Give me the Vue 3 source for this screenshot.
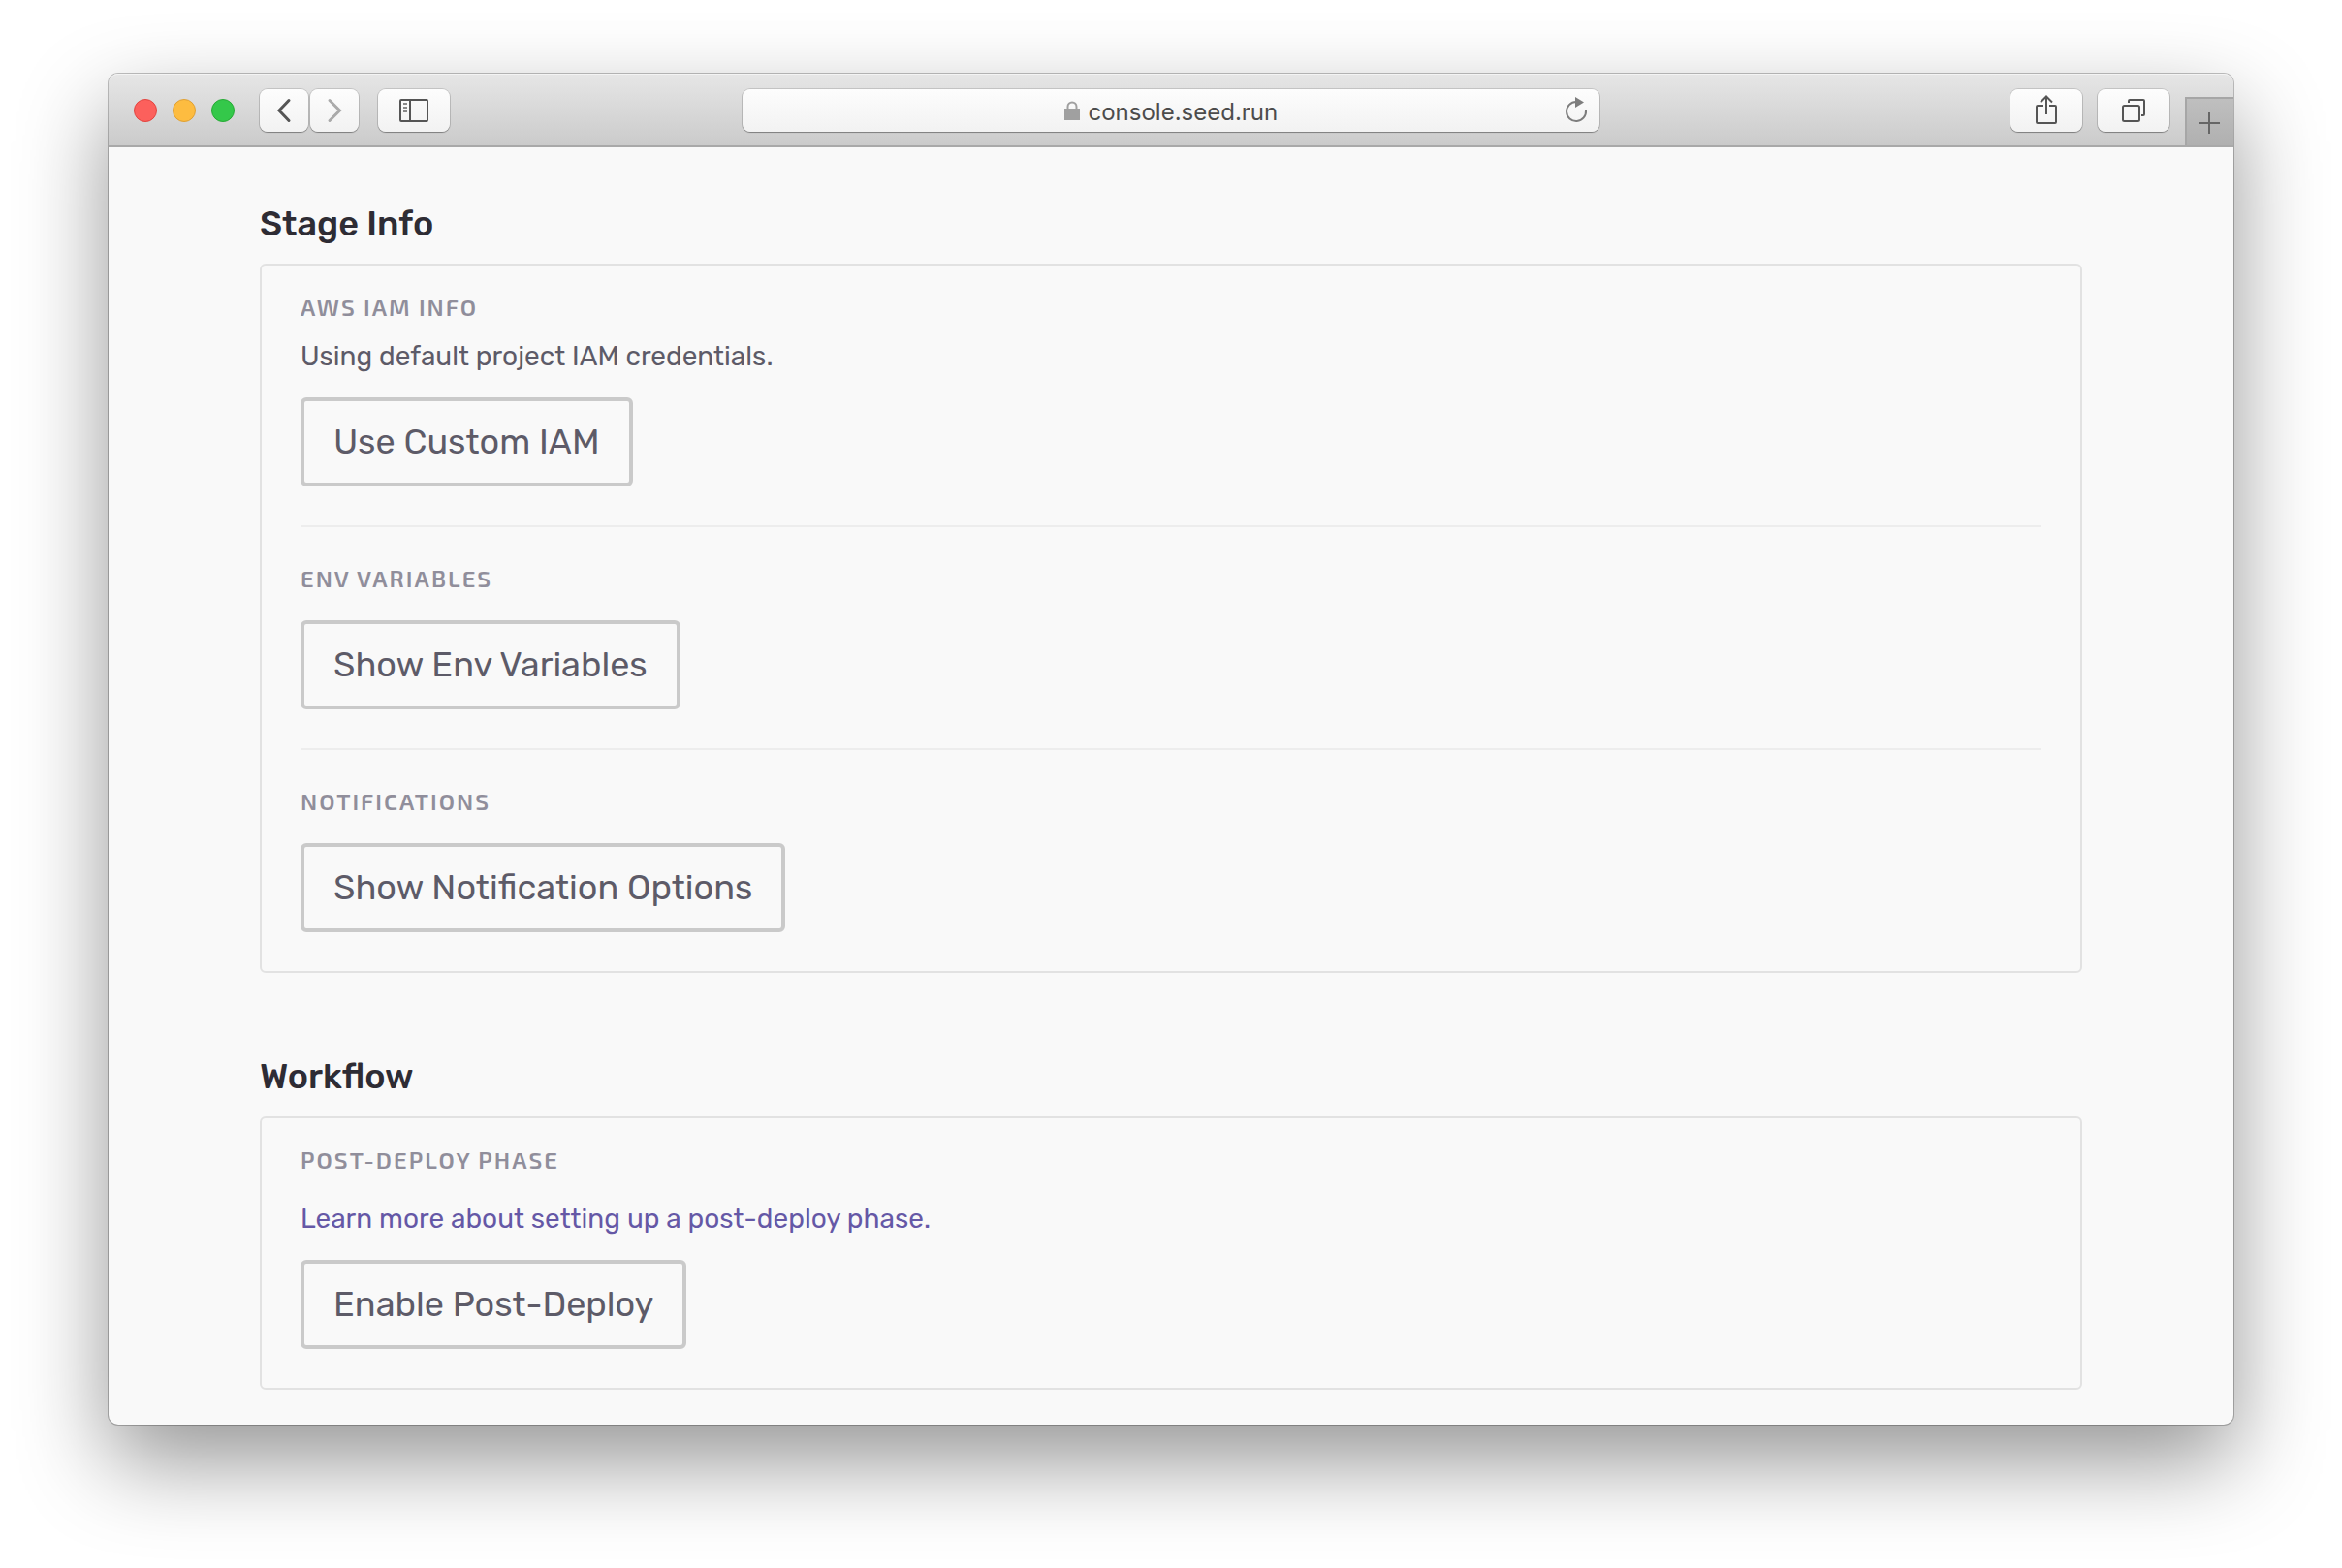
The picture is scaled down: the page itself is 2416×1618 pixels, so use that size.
<script setup>
import { ref } from 'vue'

const address = ref('console.seed.run')

const sections = [
  {
    title: 'Stage Info',
    groups: [
      { label: 'AWS IAM INFO', text: 'Using default project IAM credentials.', action: 'Use Custom IAM' },
      { label: 'ENV VARIABLES', action: 'Show Env Variables' },
      { label: 'NOTIFICATIONS', action: 'Show Notification Options' },
    ],
  },
  {
    title: 'Workflow',
    groups: [
      { label: 'POST-DEPLOY PHASE', link: 'Learn more about setting up a post-deploy phase.', action: 'Enable Post-Deploy' },
    ],
  },
]
</script>

<template>
  <div class="desktop">
    <div class="window">
      <header class="toolbar">
        <div class="side">
          <div class="lights">
            <button class="light close" aria-label="Close"></button>
            <button class="light minimize" aria-label="Minimize"></button>
            <button class="light expand" aria-label="Full screen"></button>
          </div>
          <div class="history">
            <button class="tool narrow" aria-label="Back">
              <svg width="50" height="44" fill="none" stroke="#555" stroke-width="3" stroke-linecap="round"><path d="M30 11.5L20 22L30 32.5" /></svg>
            </button>
            <button class="tool narrow" aria-label="Forward">
              <svg width="50" height="44" fill="none" stroke="#aaa" stroke-width="3" stroke-linecap="round"><path d="M20 11.5L30.5 22L20 32.5" /></svg>
            </button>
          </div>
          <button class="tool" aria-label="Sidebar">
            <svg width="74" height="44" fill="none" stroke="#555" stroke-width="2">
              <rect x="23" y="11" width="28" height="22" rx="1" />
              <path d="M33 11V33" />
              <path d="M26 15H30M26 19H30M26 23H30" stroke="#888" />
            </svg>
          </button>
        </div>

        <div class="address">
          <div class="site">
            <svg width="16" height="20" aria-hidden="true">
              <path d="M3.5 9V6A4.5 4.5 0 0 1 12.5 6V9" fill="none" stroke="#a0a0a0" stroke-width="2" />
              <rect y="8" width="16" height="12" fill="#a0a0a0" />
            </svg>
            <input v-model="address" type="text" aria-label="Address" />
          </div>
          <button class="reload" aria-label="Reload">
            <svg width="48" height="44">
              <path d="M34 22A10 10 0 1 1 24 13" fill="none" stroke="#7d7d7d" stroke-width="2" />
              <path d="M23 8L32 13.5L23 19Z" fill="#7d7d7d" />
            </svg>
          </button>
        </div>

        <div class="side end">
          <button class="tool" aria-label="Share">
            <svg width="74" height="44" fill="none" stroke="#555" stroke-width="2">
              <path d="M34 17H28Q27 17 27 18V34Q27 35 28 35H46Q47 35 47 34V18Q47 17 46 17H40" />
              <path d="M37 26V8M31 13.5L37 7.5L43 13.5" />
            </svg>
          </button>
          <button class="tool" aria-label="Show all tabs">
            <svg width="74" height="44" fill="none" stroke="#555" stroke-width="2">
              <rect x="26" y="17" width="17" height="16" rx="1.5" />
              <path d="M32 14V12Q32 11 33 11H47Q48 11 48 12V26Q48 27 47 27H45" />
            </svg>
          </button>
          <button class="new-tab" aria-label="New tab">
            <svg width="48" height="48" stroke="#666" stroke-width="2"><path d="M12 25H34M23 14V36" /></svg>
          </button>
        </div>
      </header>

      <main class="content">
        <section v-for="section in sections" :key="section.title" class="section">
          <h2>{{ section.title }}</h2>
          <div class="card">
            <div v-for="group in section.groups" :key="group.label" class="group">
              <h3>{{ group.label }}</h3>
              <p v-if="group.text">{{ group.text }}</p>
              <a v-if="group.link" href="#">{{ group.link }}</a>
              <button class="action">{{ group.action }}</button>
            </div>
          </div>
        </section>
      </main>
    </div>
  </div>
</template>

<style>
body {
  margin: 0;
  background: #fff;
}
</style>

<style scoped>
.desktop {
  padding: 76px 112px 148px;
  overflow: hidden;
  font-family: Rubik, Inter, "Liberation Sans", sans-serif;
}

button,
input {
  margin: 0;
  padding: 0;
  border: 0;
  background: none;
  font: inherit;
}

svg {
  display: block;
  flex: none;
}

.window {
  border-radius: 10px;
  background: #f9f9f9;
  box-shadow: 0 0 0 1px rgba(0, 0, 0, 0.24), 0 38px 92px rgba(0, 0, 0, 0.42);
}

.toolbar {
  display: grid;
  grid-template-columns: 1fr minmax(0, 884px) 1fr;
  box-sizing: border-box;
  height: 76px;
  padding-top: 16px;
  border-bottom: 2px solid #a9a9a9;
  border-radius: 10px 10px 0 0;
  background: linear-gradient(#e6e6e6, #cbcbcb);
  box-shadow: inset 0 2px 0 -1px #f4f4f4;
}

.side {
  display: flex;
  align-items: flex-start;
  gap: 20px;
  padding-left: 26px;
}

.side.end {
  justify-content: flex-end;
  gap: 16px;
  padding-left: 0;
}

.lights {
  display: flex;
  gap: 16px;
  margin-right: 6px;
  padding-top: 10px;
}

.light {
  box-sizing: border-box;
  width: 24px;
  height: 24px;
  border: 1px solid;
  border-radius: 50%;
}

.close {
  border-color: #e2443f;
  background: #fc605c;
}

.minimize {
  border-color: #dfa034;
  background: #fdbc40;
}

.expand {
  border-color: #27aa35;
  background: #34c84a;
}

.history {
  display: flex;
  gap: 2px;
}

.tool,
.address {
  height: 44px;
  border-radius: 8px;
  background: linear-gradient(#fdfdfd, #f2f2f2);
  box-shadow: 0 0 0 1px rgba(0, 0, 0, 0.13), 0 1px 1px rgba(0, 0, 0, 0.3);
}

.tool {
  width: 74px;
}

.tool.narrow {
  width: 50px;
}

.address {
  display: flex;
}

.site {
  display: flex;
  flex: 1;
  align-items: center;
  justify-content: center;
  gap: 9px;
  padding-left: 48px;
}

.site input {
  box-sizing: border-box;
  width: 196px;
  height: 44px;
  padding-top: 2px;
  color: #4c4c4c;
  font: 24px Inter, "Liberation Sans", sans-serif;
}

.reload {
  width: 48px;
  height: 44px;
}

.new-tab {
  box-sizing: border-box;
  align-self: flex-end;
  width: 50px;
  height: 50px;
  border: solid #a6a6a6;
  border-width: 2px 0 0 2px;
  background: linear-gradient(#bfbfbf, #b0b0b0);
}

.content {
  display: flex;
  flex-direction: column;
  gap: 86px;
  max-width: 1880px;
  margin: 0 auto;
  padding: 58px 0 36px;
}

h2 {
  margin: 0 0 20px;
  color: #2e2c34;
  font-size: 36px;
  font-weight: 500;
  line-height: 42px;
}

.card {
  padding: 0 40px;
  border: 2px solid #e2e2e2;
  border-radius: 6px;
}

.group {
  display: flex;
  flex-direction: column;
  align-items: flex-start;
  padding: 28px 0 40px;
}

.group + .group {
  padding-top: 38px;
  border-top: 2px solid #ededed;
}

h3 {
  margin: 0;
  color: #908e9b;
  font-family: "Exo 2", Roboto, sans-serif;
  font-size: 24px;
  font-weight: 600;
  line-height: 30px;
  letter-spacing: 2px;
}

p,
a {
  margin: 18px 0 0;
  color: #5d5b68;
  font-size: 28px;
  line-height: 36px;
}

a {
  margin-top: 28px;
  color: #6558a6;
  text-decoration: none;
}

.action {
  margin-top: 28px;
  padding: 21px 30px;
  border: 4px solid #cacaca;
  border-radius: 6px;
  color: #5d5b68;
  font-size: 36px;
  line-height: 42px;
}

p + .action,
a + .action {
  margin-top: 24px;
}
</style>
